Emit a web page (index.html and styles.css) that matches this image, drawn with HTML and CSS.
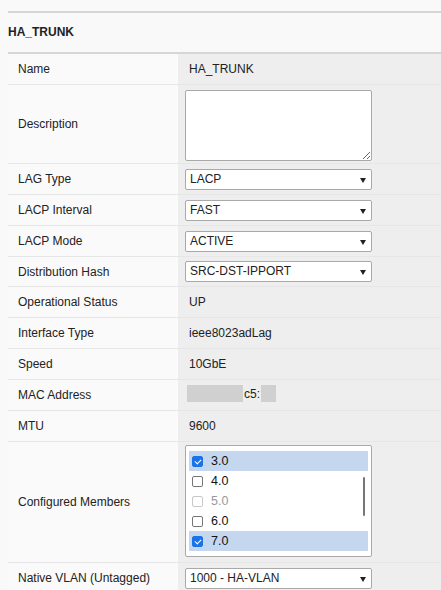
FILE: index.html
```html
<!DOCTYPE html>
<html>
<head>
<meta charset="utf-8">
<link rel="stylesheet" href="styles.css">
</head>
<body>
<div class="page">
  <div class="title">HA_TRUNK</div>
  <table class="props">
    <tr><td class="k">Name</td><td class="v txt">HA_TRUNK</td></tr>
    <tr class="desc"><td class="k">Description</td><td class="v"><textarea class="ta"></textarea></td></tr>
    <tr><td class="k">LAG Type</td><td class="v"><div class="sel">LACP<span class="arr"></span></div></td></tr>
    <tr><td class="k">LACP Interval</td><td class="v"><div class="sel">FAST<span class="arr"></span></div></td></tr>
    <tr><td class="k">LACP Mode</td><td class="v"><div class="sel">ACTIVE<span class="arr"></span></div></td></tr>
    <tr class="short"><td class="k">Distribution Hash</td><td class="v"><div class="sel">SRC-DST-IPPORT<span class="arr"></span></div></td></tr>
    <tr><td class="k">Operational Status</td><td class="v txt">UP</td></tr>
    <tr><td class="k">Interface Type</td><td class="v txt">ieee8023adLag</td></tr>
    <tr><td class="k">Speed</td><td class="v txt">10GbE</td></tr>
    <tr><td class="k">MAC Address</td><td class="v txt"><span class="mac"><span class="blur b1"></span>c5:<span class="blur b2"></span></span></td></tr>
    <tr><td class="k">MTU</td><td class="v txt">9600</td></tr>
    <tr class="members"><td class="k">Configured Members</td><td class="v top">
      <div class="list">
        <div class="item on"><span class="cb checked"></span>3.0</div>
        <div class="item"><span class="cb"></span>4.0</div>
        <div class="item dis"><span class="cb"></span>5.0</div>
        <div class="item"><span class="cb"></span>6.0</div>
        <div class="item on"><span class="cb checked"></span>7.0</div>
        <span class="scroll"></span>
      </div>
    </td></tr>
    <tr><td class="k">Native VLAN (Untagged)</td><td class="v"><div class="sel">1000 - HA-VLAN<span class="arr"></span></div></td></tr>
  </table>
</div>
</body>
</html>
```
FILE: styles.css
```css
html, body { margin: 0; padding: 0; background: #f9f9f9; }
body {
  font-family: "Liberation Sans", Arial, sans-serif;
  font-size: 12px;
  color: #222;
}
.page { padding: 11px 0 0 8px; }
.title {
  border-top: 2px solid #d6d6d6;
  border-bottom: 2px solid #d6d6d6;
  height: 39px;
  line-height: 39px;
  font-weight: bold;
  font-size: 12px;
  color: #222;
}
.props { border-collapse: separate; border-spacing: 0; width: 433px; }
.props td {
  border-bottom: 1px solid #e6e6e6;
  height: 30px;
  padding: 0;
  vertical-align: middle;
  box-sizing: content-box;
}
.props tr.short td { height: 29px; }
.k { width: 160px; padding-left: 10px !important; background: #fafafa; }
.v { background: #eeeeee; padding-left: 7px !important; }
.v.txt { padding-left: 11px !important; }
.desc td { height: 78px; }
.members td { height: 120px; }
.members td.v.top { vertical-align: top; padding-top: 3px; height: 117px; }
.ta {
  display: block;
  box-sizing: border-box;
  width: 187px;
  height: 71px;
  margin: 2px 0 0 0;
  border: 1px solid #a9a9a9;
  border-radius: 2px;
  background: #fff;
  resize: both;
}
.sel {
  position: relative;
  box-sizing: border-box;
  width: 187px;
  height: 21px;
  line-height: 19px;
  border: 1px solid #a9a9a9;
  border-radius: 2px;
  background: #fff;
  padding-left: 4px;
  color: #222;
  font-size: 12px;
}
.arr {
  position: absolute;
  right: 5px;
  top: 8px;
  width: 0; height: 0;
  border-left: 3.5px solid transparent;
  border-right: 3.5px solid transparent;
  border-top: 5px solid #222;
}
.mac { display: inline-flex; align-items: center; margin-left: -2px; }
.blur { display: inline-block; height: 17px; background: #d0d0d0; filter: blur(0.6px); }
.b1 { width: 56px; margin-right: 1px; }
.b2 { width: 15px; margin-left: 1px; }
.list {
  position: relative;
  box-sizing: border-box;
  width: 187px;
  height: 112px;
  border: 1px solid #a9a9a9;
  border-radius: 2px;
  background: #fff;
  padding: 5px 3px 0 3px;
}
.item {
  height: 20px;
  display: flex;
  align-items: center;
  font-size: 12.5px;
  color: #111;
}
.item.on { background: #c4d7ee; }
.item.dis { color: #999; }
.cb {
  box-sizing: border-box;
  width: 11px; height: 11px;
  border: 1px solid #767676;
  border-radius: 2px;
  background: #fff;
  margin: 1px 8px 0 3px;
  position: relative;
}
.item.dis .cb { border-color: #c8c8c8; }
.cb.checked { background: #1a73e8; border-color: #1a73e8; }
.cb.checked::after {
  content: "";
  position: absolute;
  left: 2.5px; top: 0.5px;
  width: 3px; height: 5px;
  border: solid #fff;
  border-width: 0 1.5px 1.5px 0;
  transform: rotate(45deg);
}
.scroll {
  position: absolute;
  right: 6px;
  top: 31px;
  width: 2px;
  height: 39px;
  background: #777;
  border-radius: 1px;
}
```
